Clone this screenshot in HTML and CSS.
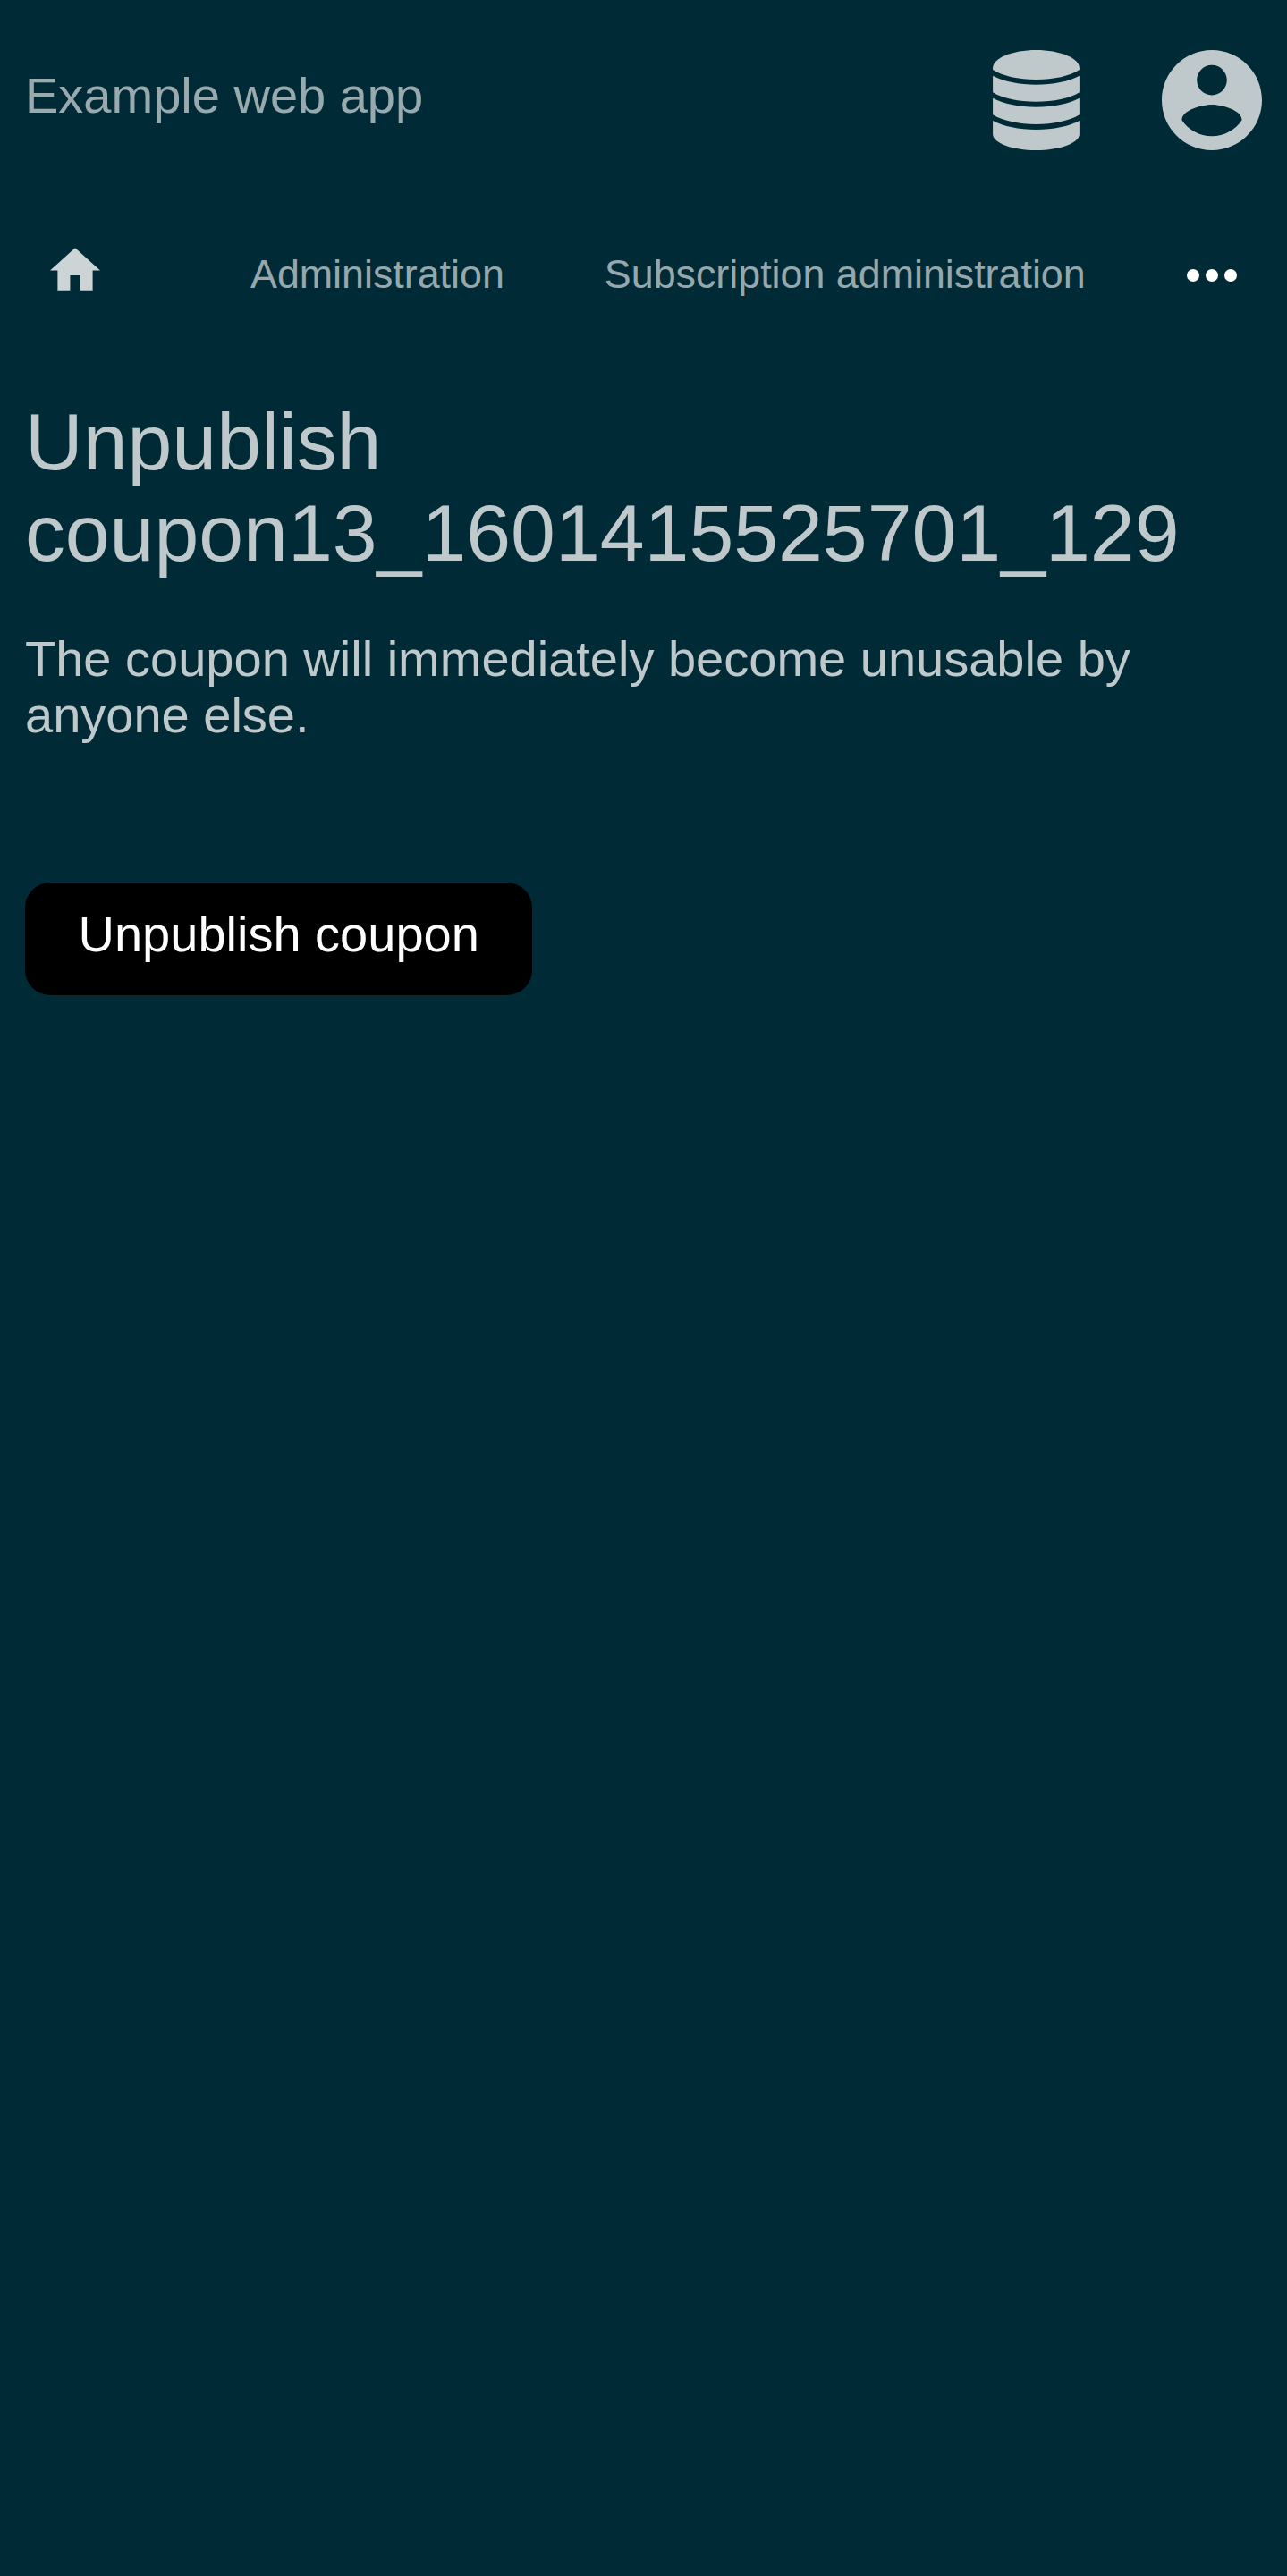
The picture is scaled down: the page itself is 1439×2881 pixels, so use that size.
FILE: index.html
```html
<!DOCTYPE html>
<html lang="en">
<head>
<meta charset="utf-8">
<title>Unpublish coupon</title>
<link rel="stylesheet" href="styles.css">
</head>
<body>
<header class="topbar">
  <a class="brand">Example web app</a>
  <div class="actions">
    <svg class="icon-database" viewBox="0 0 96.8 112">
      <path d="M0 20C0 9 22 0 48.4 0S96.8 9 96.8 20V22C86 29 68 33 48.4 33S11 29 0 22z"/>
      <path d="M0 28.7C12 35 29 38.7 48.4 38.7S85 35 96.8 28.7V47.3C86 54 68 57.8 48.4 57.8S11 54 0 47.3z"/>
      <path d="M0 53.7C12 60 29 63.7 48.4 63.7S85 60 96.8 53.7V72.3C86 79 68 83 48.4 83S11 79 0 72.3z"/>
      <path d="M0 79C12 85.3 29 89 48.4 89S85 85.3 96.8 79V94C96.8 104 75 112 48.4 112S0 104 0 94z"/>
    </svg>
    <svg class="icon-account" viewBox="2 2 20 20">
      <path d="M12 2C6.48 2 2 6.48 2 12s4.48 10 10 10 10-4.480 10-10S17.520 2 12 2zm0 3c1.660 0 3 1.340 3 3s-1.340 3-3 3-3-1.340-3-3 1.340-3 3-3zm0 14.200c-2.500 0-4.710-1.280-6-3.220.030-1.990 4-3.080 6-3.080 1.990 0 5.970 1.090 6 3.080-1.290 1.940-3.500 3.220-6 3.220z"/>
    </svg>
  </div>
</header>
<nav class="crumbs">
  <svg class="icon-home" viewBox="2 3 20 17"><path d="M10 20v-6h4v6h5v-8h3L12 3 2 12h3v8z"/></svg>
  <a class="crumb">Administration</a>
  <a class="crumb">Subscription administration</a>
  <svg class="icon-more" viewBox="0 0 56 14"><circle cx="7" cy="7" r="7"/><circle cx="28" cy="7" r="7"/><circle cx="49" cy="7" r="7"/></svg>
</nav>
<main class="content">
  <h1 class="heading">Unpublish coupon13_1601415525701_129</h1>
  <p class="message">The coupon will immediately become unusable by anyone else.</p>
  <button class="submit">Unpublish coupon</button>
</main>
</body>
</html>
```
FILE: styles.css
```css
* {
  box-sizing: border-box;
}

body {
  margin: 0;
  min-height: 2881px;
  background: #002b36;
  color: rgba(255, 255, 255, 0.75);
  font: 56px/63px "Liberation Sans", Arial, sans-serif;
}

svg {
  display: block;
  fill: currentColor;
}

.topbar {
  display: flex;
  justify-content: space-between;
  height: 224px;
  padding: 56px 28.5px 0 28px;
}

.brand {
  padding-top: 19px;
  color: rgba(255, 255, 255, 0.6);
}

.actions {
  display: flex;
  gap: 91.5px;
}

.icon-database {
  width: 97px;
  height: 112px;
}

.icon-account {
  width: 112px;
  height: 112px;
}

.crumbs {
  display: flex;
  height: 192px;
  padding: 53px 56.5px 0 56px;
  font-size: 44.8px;
  line-height: 50px;
}

.icon-home {
  width: 56px;
  height: 48px;
  margin-right: 168px;
  color: rgba(255, 255, 255, 0.8);
}

.crumb {
  margin-right: 112px;
  padding-top: 4px;
  color: rgba(255, 255, 255, 0.6);
  white-space: nowrap;
}

.icon-more {
  width: 56px;
  height: 14px;
  margin: 32px 0 0 auto;
  margin-top: 24px;
  color: #fff;
}

.content {
  padding: 27px 28px 0;
}

.heading {
  margin: 0 0 58px;
  font-size: 89.6px;
  font-weight: 400;
  line-height: 102px;
}

.message {
  margin: 0 0 156px;
}

.submit {
  display: block;
  height: 126px;
  padding: 26px 59.5px 37px;
  border: 0;
  border-radius: 28px;
  background: #000;
  color: #fff;
  font: inherit;
}
```
